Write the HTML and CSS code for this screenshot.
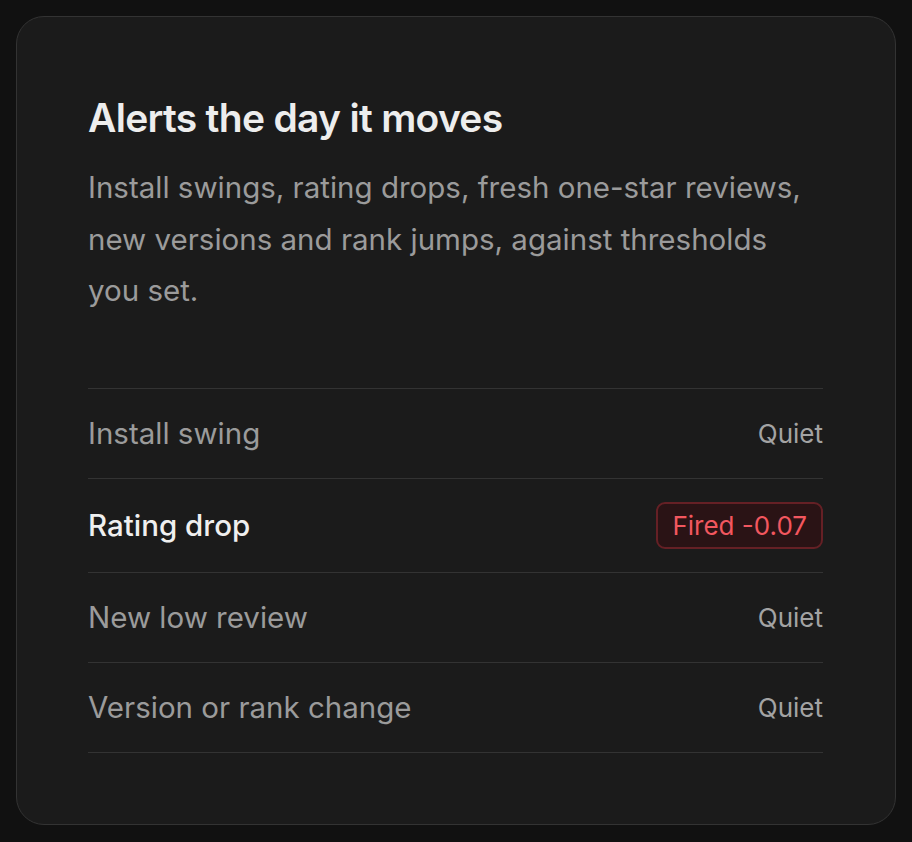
FILE: index.html
```html
<!DOCTYPE html>
<html lang="en">
<head>
<meta charset="utf-8">
<title>Alerts</title>
<link rel="stylesheet" href="styles.css">
</head>
<body>
  <section class="card">
    <h2 class="card-title">Alerts the day it moves</h2>
    <p class="card-text">Install swings, rating drops, fresh one-star reviews, new versions and rank jumps, against thresholds you set.</p>
    <ul class="alert-list">
      <li class="alert-row"><span class="alert-name">Install swing</span><span class="alert-status">Quiet</span></li>
      <li class="alert-row is-active"><span class="alert-name">Rating drop</span><span class="alert-badge">Fired -0.07</span></li>
      <li class="alert-row"><span class="alert-name">New low review</span><span class="alert-status">Quiet</span></li>
      <li class="alert-row"><span class="alert-name">Version or rank change</span><span class="alert-status">Quiet</span></li>
    </ul>
  </section>
</body>
</html>
```
FILE: styles.css
```css
* { box-sizing: border-box; }
html, body { margin: 0; padding: 0; }
body {
  background: #111111;
  padding: 16px;
  font-family: "Inter", "Noto Sans", sans-serif;
  -webkit-font-smoothing: antialiased;
}
.card {
  background: #1b1b1b;
  border: 1px solid #333333;
  border-radius: 28px;
  padding: 77px 72px 71px 71px;
}
.card-title {
  margin: 0;
  font-size: 39px;
  font-weight: 600;
  line-height: 47px;
  color: #ededed;
  letter-spacing: -0.018em;
}
.card-text {
  margin: 21px 0 0;
  font-size: 29.5px;
  line-height: 51.5px;
  color: #9b9b9b;
}
.alert-list {
  list-style: none;
  margin: 71px 0 0;
  padding: 0;
  border-top: 1px solid #333333;
}
.alert-row {
  display: flex;
  align-items: center;
  justify-content: space-between;
  min-height: 90px;
  padding: 23px 0;
  border-bottom: 1px solid #333333;
}
.alert-name {
  font-size: 29.5px;
  line-height: 36px;
  color: #9b9b9b;
}
.is-active .alert-name {
  color: #efefef;
  font-weight: 500;
}
.alert-status {
  font-size: 26px;
  line-height: 31px;
  color: #a3a3a3;
}
.alert-badge {
  font-size: 26px;
  line-height: 31px;
  color: #f2575f;
  background: #2a1315;
  border: 2px solid #652025;
  border-radius: 9px;
  padding: 6px 14px;
}
```
